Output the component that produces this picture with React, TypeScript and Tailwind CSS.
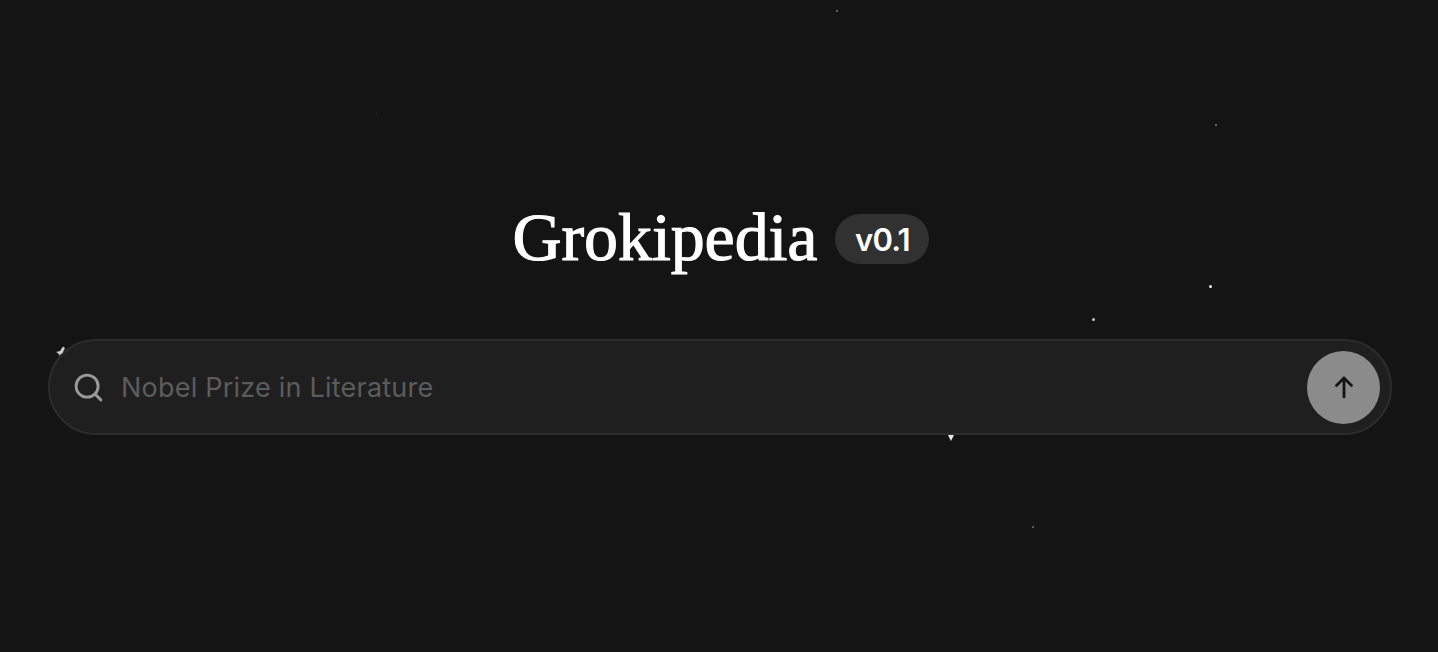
import { Search } from "lucide-react"

const STARS = [
  { x: 837, y: 11, size: 2, alpha: 0.45 },
  { x: 376, y: 113, size: 1, alpha: 0.2 },
  { x: 1216, y: 125, size: 2, alpha: 0.45 },
  { x: 1210, y: 286, size: 3, alpha: 0.95 },
  { x: 1093, y: 319, size: 3, alpha: 0.75 },
  { x: 1033, y: 527, size: 2, alpha: 0.4 },
]

export default function App() {
  return (
    <div className="relative flex h-[652px] w-full flex-col items-center overflow-hidden bg-[#141414] pl-12 pr-[46px] pt-[203px] font-['Inter',sans-serif]">
      {/* Stars */}
      {STARS.map((s, i) => (
        <div
          key={i}
          className="absolute rounded-full bg-white"
          style={{ left: s.x - s.size / 2, top: s.y - s.size / 2, width: s.size, height: s.size, opacity: s.alpha }}
        />
      ))}
      <svg className="absolute left-[55px] top-[346px] z-10 h-3 w-3" viewBox="0 0 12 12">
        <path d="M1 6 L5 5 L8 0.5 L10 2 L7.5 7 L4 9.5 L3.5 7.5 Z" fill="#cfcfcf" />
      </svg>
      <svg className="absolute left-[947px] top-[434px] h-2 w-2" viewBox="0 0 8 8">
        <path d="M1 1 H7 L4 7 Z" fill="#e8e8e8" />
      </svg>

      <div className="relative flex items-center gap-[18px]">
        <h1 className="ml-[2px] font-['Liberation_Serif',serif] text-[68px] leading-[68px] tracking-[-0.1px] text-white [-webkit-text-stroke:1.1px_#fff]">Grokipedia</h1>
        <span className="mt-1 flex h-[50px] w-[94px] items-center justify-center rounded-full bg-[#313131] pt-[2px] text-[31px] font-semibold tracking-[-0.8px] text-white">
          v0.1
        </span>
      </div>

      {/* Search bar */}
      <div className="relative mt-[68px] flex h-24 w-full items-center rounded-full border-2 border-[#2c2c2c] bg-[#1f1f1f] pl-[22px] pr-[10px]">
        <Search className="h-[33px] w-[33px] text-[#9a9a9a]" strokeWidth={2.1} />
        <span className="ml-4 flex-1 pt-[2px] text-[27px] tracking-[0.22px] text-[#5c5c5c]">Nobel Prize in Literature</span>
        <button className="flex h-[73px] w-[73px] items-center justify-center rounded-full bg-[#8b8b8c] text-[#141414]">
          <svg className="h-6 w-6" viewBox="0 0 24 24" fill="none" stroke="currentColor" strokeWidth={2.8} strokeLinecap="round" strokeLinejoin="round">
            <path d="M12 3V22 M4.5 10.5 L12 3 L19.5 10.5" />
          </svg>
        </button>
      </div>
    </div>
  )
}
